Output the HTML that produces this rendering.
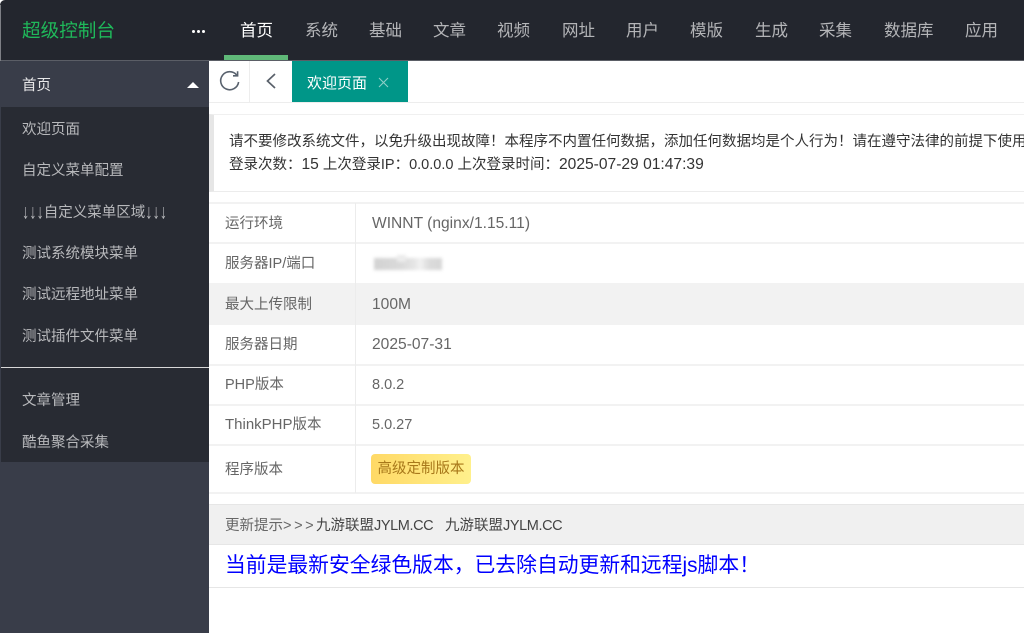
<!DOCTYPE html>
<html lang="zh">
<head>
<meta charset="utf-8">
<style>
html,body{margin:0;padding:0;width:1024px;height:633px;overflow:hidden;background:#fff}
body{position:relative;font-family:"Liberation Sans","Noto Sans CJK SC",sans-serif;font-size:14.5px;color:#666}
.a{position:absolute;white-space:nowrap}
.top{left:0;top:0;width:1024px;height:60px;background:#23262e;border-bottom:1px solid #5b5e66;box-sizing:content-box;border-top-left-radius:5px}
.nav{top:20px;font-size:16.5px;line-height:22px;color:#b4b5b8}
.side{left:0;top:61px;width:209px;height:572px;background:#393d49}
.sub{left:1px;top:107px;width:208px;height:355px;background:#282b33}
.mi{left:22px;font-size:14.5px;line-height:20px;color:#b8b9bc}
.h{height:1px;background:#ededed}
.lbl{left:225px;color:#666;font-size:14.5px;line-height:20px}
.val{left:372px;color:#666;font-size:14.5px;line-height:20px}
.big{font-size:15.6px}
.row{left:209px;width:815px;height:2px;background:#f2f2f2}
.ar{display:inline-block;transform:scaleY(1.4);font-weight:bold}
</style>
</head>
<body>
<div class="a top"></div>
<div class="a" style="left:0;top:5px;width:1px;height:628px;background:#7d7f85"></div>
<div class="a" style="left:22px;top:18px;font-size:18.6px;line-height:26px;color:#1fb85a">超级控制台</div>
<div class="a" style="left:192px;top:30px;width:3.2px;height:3.2px;background:#fff;border-radius:50%;box-shadow:5px 0 0 #fff,10px 0 0 #fff"></div>
<div class="a nav" style="left:240px;color:#fff">首页</div>
<div class="a nav" style="left:305px">系统</div>
<div class="a nav" style="left:369px">基础</div>
<div class="a nav" style="left:433px">文章</div>
<div class="a nav" style="left:497px">视频</div>
<div class="a nav" style="left:562px">网址</div>
<div class="a nav" style="left:626px">用户</div>
<div class="a nav" style="left:690px">模版</div>
<div class="a nav" style="left:755px">生成</div>
<div class="a nav" style="left:819px">采集</div>
<div class="a nav" style="left:884px">数据库</div>
<div class="a nav" style="left:965px">应用</div>
<div class="a" style="left:224px;top:55px;width:64px;height:5px;background:#5fb878"></div>

<div class="a side"></div>
<div class="a sub"></div>
<div class="a" style="left:22px;top:76px;font-size:14.5px;line-height:20px;color:#e8e8e9">首页</div>
<div class="a" style="left:187px;top:82px;width:0;height:0;border-left:6px solid transparent;border-right:6px solid transparent;border-bottom:6px solid #fff"></div>
<div class="a mi" style="top:120px">欢迎页面</div>
<div class="a mi" style="top:161px">自定义菜单配置</div>
<div class="a mi" style="top:203px"><span class="ar">↓↓↓</span>自定义菜单区域<span class="ar">↓↓↓</span></div>
<div class="a mi" style="top:244px">测试系统模块菜单</div>
<div class="a mi" style="top:285px">测试远程地址菜单</div>
<div class="a mi" style="top:327px">测试插件文件菜单</div>
<div class="a" style="left:1px;top:367px;width:208px;height:1px;background:#d8d8d8"></div>
<div class="a mi" style="top:391px">文章管理</div>
<div class="a mi" style="top:433px">酷鱼聚合采集</div>

<div class="a h" style="left:209px;top:102px;width:815px"></div>
<div class="a" style="left:249px;top:61px;width:1px;height:41px;background:#ededed"></div>
<svg class="a" style="left:218px;top:69px" width="24" height="24" viewBox="0 0 24 24" fill="none" stroke="#59626e" stroke-width="1.6"><path d="M18.8 6.2A9 9 0 1 0 20.6 13"/><path d="M19.6 2.2v4.6h-4.6"/></svg>
<svg class="a" style="left:263px;top:71px" width="16" height="20" viewBox="0 0 16 20" fill="none" stroke="#59606a" stroke-width="1.7"><path d="M12 3L4.5 10l7.5 7"/></svg>
<div class="a" style="left:292px;top:61px;width:116px;height:41px;background:#009688"></div>
<div class="a" style="left:307px;top:74px;font-size:15px;line-height:20px;color:#fff">欢迎页面</div>
<svg class="a" style="left:378px;top:77px" width="11" height="11" viewBox="0 0 11 11" stroke="#8fcfc8" stroke-width="1.1"><path d="M1 1l9 9M10 1l-9 9"/></svg>

<div class="a" style="left:209px;top:114px;width:815px;height:78px;box-sizing:border-box;border-top:1px solid #f0f0f0;border-bottom:1px solid #ececec;border-left:5px solid #e6e6e6"></div>
<div class="a" style="left:229px;top:131px;font-size:14.5px;line-height:22px;color:#333">请不要修改系统文件，以免升级出现故障！本程序不内置任何数据，添加任何数据均是个人行为！请在遵守法律的前提下使用本程序</div>
<div class="a" style="left:229px;top:154px;font-size:14.5px;line-height:22px;color:#333">登录次数：<span class="big">15</span> 上次登录IP：0.0.0.0 上次登录时间：<span class="big">2025-07-29 01:47:39</span></div>

<div class="a" style="left:209px;top:283px;width:815px;height:41px;background:#f2f2f2"></div>
<div class="a row" style="top:202px"></div>
<div class="a row" style="top:242px"></div>
<div class="a row" style="top:283px"></div>
<div class="a row" style="top:323px"></div>
<div class="a row" style="top:364px"></div>
<div class="a row" style="top:404px"></div>
<div class="a row" style="top:444px"></div>
<div class="a row" style="top:492px"></div>
<div class="a" style="left:355px;top:203px;width:1px;height:290px;background:#ececec"></div>

<div class="a lbl" style="top:214px">运行环境</div><div class="a val big" style="top:214px">WINNT (nginx/1.15.11)</div>
<div class="a lbl" style="top:254px">服务器IP/端口</div>
<div class="a" style="left:374px;top:258px;width:68px;height:12px;background:linear-gradient(90deg,#d2d2d2,#dadada 40%,#e6e6e6 60%,#f2f2f2 68%,#dcdcdc 80%,#d6d6d6);filter:blur(1.5px)"></div>
<div class="a" style="left:397px;top:255px;width:9px;height:7px;background:#ececec;filter:blur(1.5px)"></div>
<div class="a lbl" style="top:295px">最大上传限制</div><div class="a val big" style="top:295px">100M</div>
<div class="a lbl" style="top:335px">服务器日期</div><div class="a val big" style="top:335px">2025-07-31</div>
<div class="a lbl" style="top:375px">PHP版本</div><div class="a val" style="top:375px">8.0.2</div>
<div class="a lbl" style="top:415px"><span style="font-size:15px">ThinkPHP</span>版本</div><div class="a val" style="top:415px">5.0.27</div>
<div class="a lbl" style="top:460px">程序版本</div>
<div class="a" style="left:371px;top:454px;width:100px;height:30px;border-radius:4px;background:linear-gradient(90deg,#ffd966,#fff08c);color:#a8781a;font-size:14.5px;line-height:31px;text-align:center">高级定制版本</div>

<div class="a" style="left:209px;top:504px;width:815px;height:41px;box-sizing:border-box;background:#f0f0f0;border-top:1px solid #e6e6e6;border-bottom:1px solid #e6e6e6"></div>
<div class="a" style="left:225px;top:516px;font-size:14.5px;line-height:20px;color:#666">更新提示<span style="letter-spacing:2.6px">&gt;&gt;&gt;</span></div>
<div class="a" style="left:316px;top:516px;font-size:14.5px;line-height:20px;color:#444">九游联盟<span style="letter-spacing:-.4px">JYLM.CC</span></div>
<div class="a" style="left:445px;top:516px;font-size:14.5px;line-height:20px;color:#444">九游联盟<span style="letter-spacing:-.4px">JYLM.CC</span></div>
<div class="a" style="left:225px;top:552px;font-size:20.8px;line-height:28px;color:#0000ff">当前是最新安全绿色版本，已去除自动更新和远程js脚本！</div>
<div class="a" style="left:209px;top:587px;width:815px;height:1px;background:#e6e6e6"></div>
</body>
</html>
